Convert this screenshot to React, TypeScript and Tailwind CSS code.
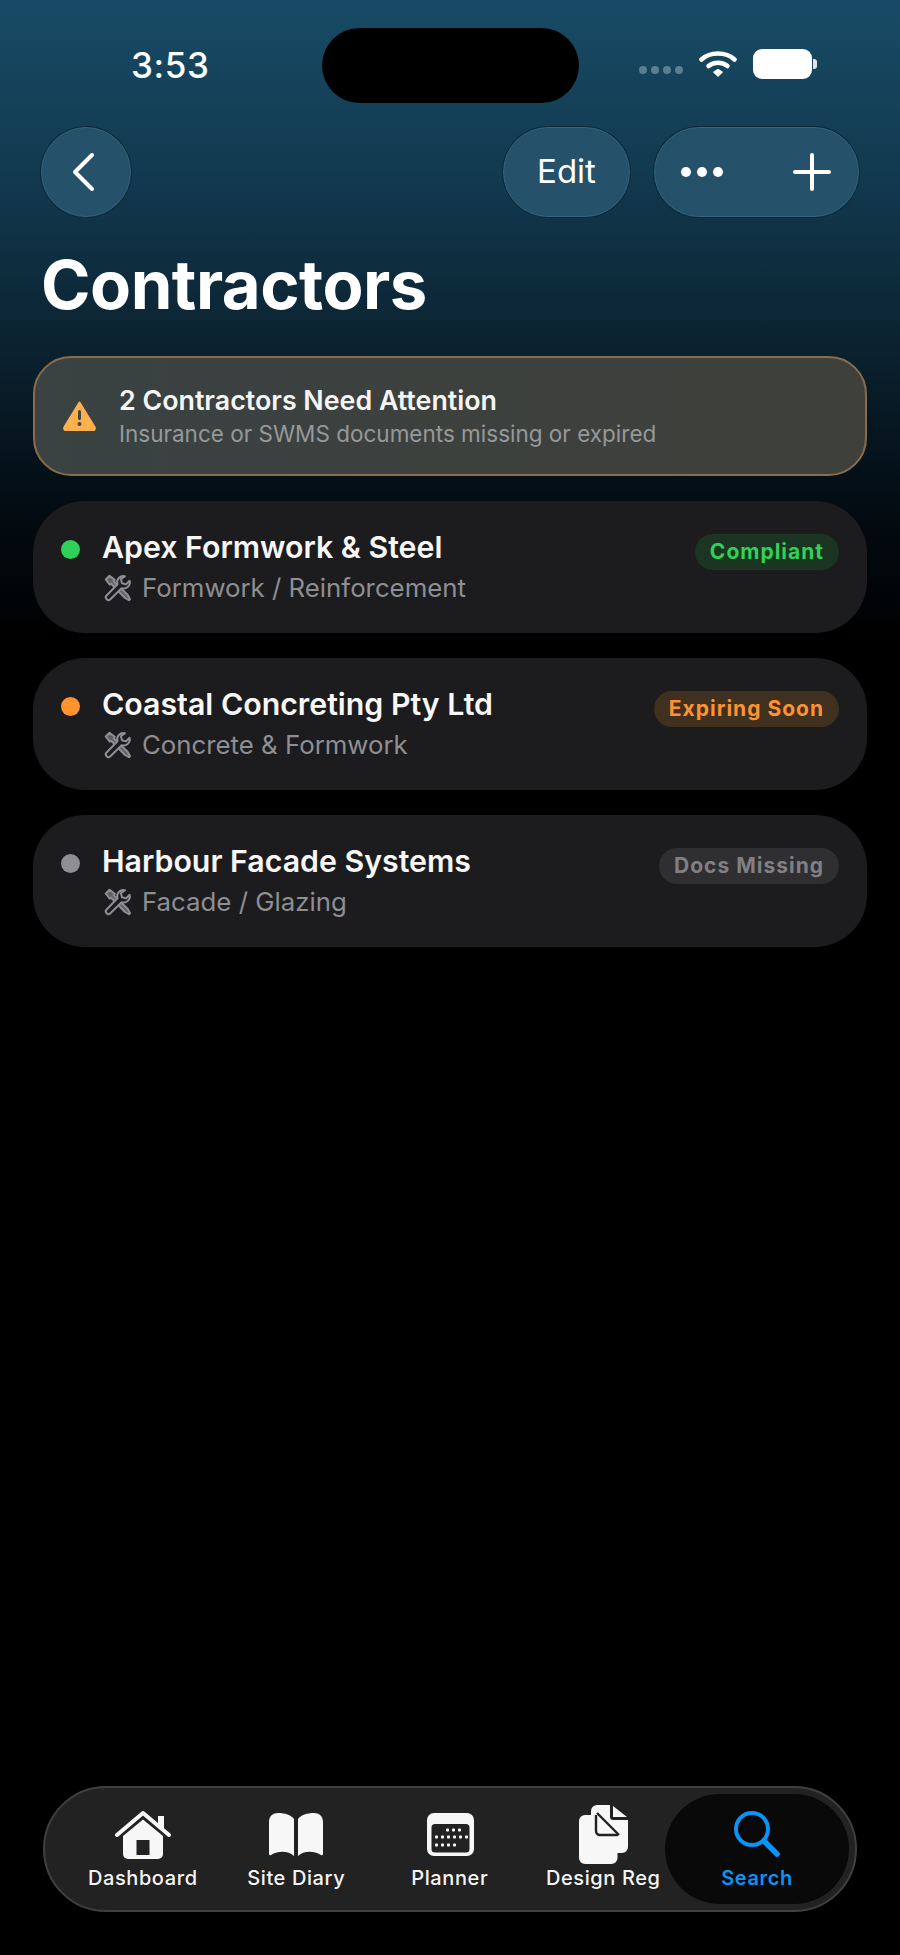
import React from "react";

const font = { fontFamily: "Inter, 'Liberation Sans', sans-serif" };

function Tools() {
  return (
    <svg width="30" height="30" viewBox="0 0 24 24" fill="none" stroke="#8e8e93" strokeWidth="1.6" strokeLinejoin="round" strokeLinecap="round">
      <path d="M2.200 5.200 5.200 2.200 9.400 5.400 8.600 6.600 19.800 17.600 21.600 21 20.800 21.800 17.600 20 6.600 8.600 5.400 9.400Z" fill="#8e8e93" fillOpacity="0.6" />
      <path d="M17.600 2.600a5 5 0 0 0-6 6.400L2.900 18a2.100 2.100 0 0 0 3 3l9-8.800a5 5 0 0 0 6.400-6l-2.900 2.900-3.200-.9-.9-3.200Z" fill="#1c1c1e" />
    </svg>
  );
}

function House() {
  return (
    <svg width="56" height="49" viewBox="0 0 56 49">
      <path d="M2 25 28 3 54 25" fill="none" stroke="#f7f7f7" strokeWidth="4" strokeLinecap="round" strokeLinejoin="round" />
      <rect x="43" y="6" width="6" height="12" fill="#f7f7f7" />
      <path d="M8 26 28 9.500 48 26V44a5 5 0 0 1-5 5H13a5 5 0 0 1-5-5Z" fill="#f7f7f7" />
      <rect x="21.500" y="30" width="13" height="15" fill="#222222" />
    </svg>
  );
}

function Book() {
  return (
    <svg width="54" height="43" viewBox="0 0 54 43" fill="#f7f7f7">
      <path d="M0 9C0 3 4 0 9 0c7 0 13 2 16 6v37c-5-5-15-6-23-1-1 .6-2 0-2-1Z" />
      <path d="M54 9C54 3 50 0 45 0c-7 0-13 2-16 6v37c5-5 15-6 23-1 1 .6 2 0 2-1Z" />
    </svg>
  );
}

function Calendar() {
  const cells = [
    [20, 17], [26, 17], [32, 17],
    [9, 24], [15, 24], [21, 24], [27, 24], [33, 24], [39, 24],
    [9, 32], [15, 32], [21, 32], [27, 32],
  ];
  return (
    <svg className="ml-[2px]" width="47" height="43" viewBox="0 0 47 43">
      <rect width="47" height="43" rx="7" fill="#f7f7f7" />
      <rect x="4.500" y="11" width="38" height="28.500" rx="3.500" fill="#222222" />
      {cells.map(([x, y], i) => (
        <rect key={i} x={x - 1} y={y - 1.5} width="3" height="3" rx="0.8" fill="#f7f7f7" />
      ))}
    </svg>
  );
}

function Docs() {
  return (
    <svg width="49" height="59" viewBox="0 0 49 59">
      <path d="M18 0H31V12a3 3 0 0 0 3 3H49V42a6 6 0 0 1-6 6H18a6 6 0 0 1-6-6V6a6 6 0 0 1 6-6Z" fill="#f7f7f7" />
      <path d="M34 1 48 12H34Z" fill="#f7f7f7" />
      <path d="M6 10H19L38.500 29.500V53a6 6 0 0 1-6 6H6a6 6 0 0 1-6-6V16a6 6 0 0 1 6-6Z" fill="#f7f7f7" />
      <path d="M17 10V26a4 4 0 0 0 4 4H39" fill="none" stroke="#222222" strokeWidth="2.400" strokeLinejoin="round" />
      <path d="M18 8 40 30" fill="none" stroke="#222222" strokeWidth="2.400" />
    </svg>
  );
}

function SearchIcon() {
  return (
    <svg width="46" height="46" viewBox="0 0 46 46" fill="none" stroke="#0a94f5">
      <circle cx="18" cy="18" r="16" strokeWidth="4" />
      <path d="M30 30 43 43" strokeWidth="5.500" strokeLinecap="round" />
    </svg>
  );
}

const rows = [
  {
    name: "Apex Formwork & Steel",
    sub: "Formwork / Reinforcement",
    dot: "bg-[#30d158]",
    badge: "Compliant",
    badgeCls: "bg-[#1c3522] text-[#30d158]",
  },
  {
    name: "Coastal Concreting Pty Ltd",
    sub: "Concrete & Formwork",
    dot: "bg-[#ff9330]",
    badge: "Expiring Soon",
    badgeCls: "bg-[#40301f] text-[#ff9330]",
  },
  {
    name: "Harbour Facade Systems",
    sub: "Facade / Glazing",
    dot: "bg-[#8e8e93]",
    badge: "Docs Missing",
    badgeCls: "bg-[#2f2f32] text-[#808084]",
  },
];

const tabs = [
  { label: "Dashboard", icon: <House /> },
  { label: "Site Diary", icon: <Book /> },
  { label: "Planner", icon: <Calendar /> },
  { label: "Design Reg", icon: <Docs /> },
];

export default function App() {
  return (
    <div style={font} className="flex h-[1955px] w-[900px] flex-col overflow-hidden bg-[linear-gradient(180deg,#184b66_0px,#123a50_170px,#0b2331_340px,#030d14_500px,#000000_640px)] text-white">
      {/* status bar */}
      <div className="flex h-[75px] mt-[28px] items-center">
        <div className="w-[322px] pl-[131px] text-[35px] font-medium leading-none tracking-[0.6px]">3:53</div>
        <div className="h-[75px] w-[257px] rounded-full bg-black" />
        <div className="ml-[60px] mt-[8px] flex gap-[4px]">
          <span className="h-[8px] w-[8px] rounded-full bg-[#5b7e90]" />
          <span className="h-[8px] w-[8px] rounded-full bg-[#5b7e90]" />
          <span className="h-[8px] w-[8px] rounded-full bg-[#5b7e90]" />
          <span className="h-[8px] w-[8px] rounded-full bg-[#5b7e90]" />
        </div>
        <svg className="ml-[16px] mt-[-4px]" width="38" height="29" viewBox="0 0 38 29" fill="none" stroke="#ffffff" strokeWidth="4.500" strokeLinecap="round">
          <path d="M2.500 10.500C11 2.500 27 2.500 35.500 10.500" />
          <path d="M9.500 17C14.500 12.500 23.500 12.500 28.500 17" />
          <path d="M15 23.200 19 20.500 23 23.200 19 27Z" fill="#ffffff" strokeWidth="1.500" strokeLinejoin="round" />
        </svg>
        <div className="ml-[16px] h-[30px] w-[59px] rounded-[9px] bg-white mt-[-4px]" />
        <div className="ml-[1px] h-[10px] w-[4px] rounded-r-[3px] bg-[#dfe5e8] mt-[-4px]" />
      </div>

      {/* nav */}
      <div className="mt-[24px] flex h-[90px] pl-[41px] pr-[41px]">
        <button className="flex h-[90px] w-[90px] items-center justify-center rounded-full border border-[#33657e] bg-[#25516a] pr-[6px] shadow-[0_0_0_1px_#0c2a3b]">
          <svg width="24" height="40" viewBox="0 0 24 40" fill="none" stroke="#ffffff" strokeWidth="4" strokeLinecap="round" strokeLinejoin="round">
            <path d="M21 3 4 20 21 37" />
          </svg>
        </button>
        <button className="ml-auto flex h-[90px] w-[127px] items-center justify-center rounded-[45px] border border-[#33657e] bg-[#25516a] text-[33px] font-normal text-white shadow-[0_0_0_1px_#0c2a3b]">
          Edit
        </button>
        <button className="ml-[24px] flex h-[90px] w-[205px] items-center justify-between rounded-[45px] border border-[#33657e] bg-[#25516a] pl-[26px] pr-[27px] shadow-[0_0_0_1px_#0c2a3b]">
          <span className="flex gap-[6px]">
            <span className="h-[10px] w-[10px] rounded-full bg-white" />
            <span className="h-[10px] w-[10px] rounded-full bg-white" />
            <span className="h-[10px] w-[10px] rounded-full bg-white" />
          </span>
          <svg width="38" height="38" viewBox="0 0 38 38" fill="none" stroke="#ffffff" strokeWidth="4" strokeLinecap="round">
            <path d="M19 2V36M2 19H36" />
          </svg>
        </button>
      </div>

      {/* title */}
      <h1 className="mt-[32px] pl-[41px] text-[67px] font-bold leading-[72px] tracking-[-0.5px]">Contractors</h1>

      {/* list */}
      <div className="mt-[35px] flex flex-col gap-[25px] px-[33px]">
        <div className="flex h-[120px] items-center rounded-[38px] border-2 border-[#8a6c4a] bg-[linear-gradient(90deg,#3a4242,#3f403b)] pl-[28px]">
          <svg width="33" height="30" viewBox="0 0 33 30">
            <path d="M16.500 1.500 31.500 26a2.300 2.300 0 0 1-2 3.500H3.500a2.300 2.300 0 0 1-2-3.500Z" fill="#ffb04f" stroke="#ffb04f" strokeWidth="2" strokeLinejoin="round" />
            <rect x="15" y="9" width="3" height="10" rx="1.500" fill="#3f4343" />
            <circle cx="16.500" cy="23" r="2" fill="#3f4343" />
          </svg>
          <div className="ml-[23px]">
            <div className="text-[26.800px] font-semibold leading-[34px] text-[#f5f5f5]">2 Contractors Need Attention</div>
            <div className="mt-[2px] text-[22.500px] leading-[30px] text-[#96999a]">Insurance or SWMS documents missing or expired</div>
          </div>
        </div>

        {rows.map((r) => (
          <div key={r.name} className="flex h-[132px] rounded-[52px] bg-[#1c1c1e] pl-[28px] pr-[28px] pt-[26px]">
            <span className={`mt-[13px] h-[19px] w-[19px] shrink-0 rounded-full ${r.dot}`} />
            <div className="ml-[22px]">
              <div className="text-[30.300px] font-semibold leading-[40px] text-[#f7f7f7]">{r.name}</div>
              <div className="mt-[2px] flex items-center pl-[1px]">
                <Tools />
                <span className="ml-[9px] text-[25.800px] leading-[38px] text-[#8e8e93]">{r.sub}</span>
              </div>
            </div>
            <span className={`ml-auto mt-[7px] flex h-[36px] items-center rounded-full px-[15px] text-[21px] font-bold tracking-[1px] ${r.badgeCls}`}>
              {r.badge}
            </span>
          </div>
        ))}
      </div>

      {/* tab bar */}
      <div className="mb-[43px] ml-[43px] mt-auto flex h-[126px] w-[814px] rounded-[63px] border-2 border-[#404041] bg-[#222222] pl-[21px]">
        {tabs.map((t) => (
          <div key={t.label} className="flex w-[153.500px] flex-col items-center pt-[16px]">
            <div className="flex h-[60px] items-center justify-center">{t.icon}</div>
            <div className="text-[20px] font-medium leading-[28px] tracking-[0.6px] text-[#f5f5f5]">{t.label}</div>
          </div>
        ))}
        <div className="ml-[-15px] mt-[6px] flex h-[110px] w-[184px] flex-col items-center rounded-[55px] bg-[#090909] pt-[10px]">
          <div className="flex h-[60px] items-center justify-center"><SearchIcon /></div>
          <div className="text-[20px] font-semibold leading-[28px] tracking-[0.6px] text-[#0a94f5]">Search</div>
        </div>
      </div>
    </div>
  );
}
